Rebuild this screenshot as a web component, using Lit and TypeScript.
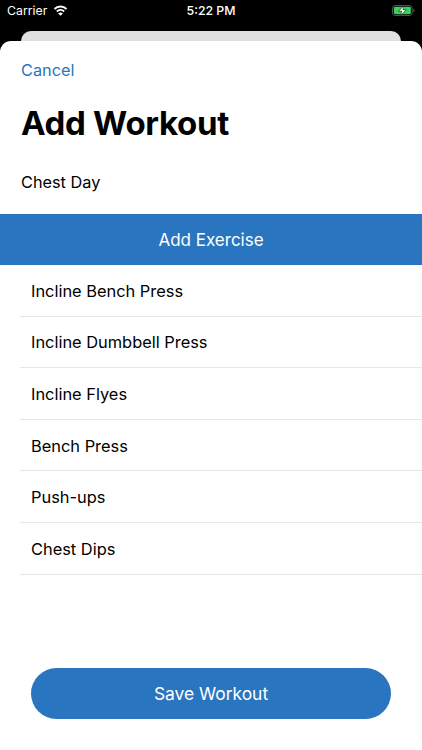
import { LitElement, html, css, svg } from "lit";
import { customElement } from "lit/decorators.js";

const EXERCISES = [
  "Incline Bench Press",
  "Incline Dumbbell Press",
  "Incline Flyes",
  "Bench Press",
  "Push-ups",
  "Chest Dips",
];

const wifi = svg`<svg width="15" height="11" viewBox="0 0 17 13">
  <path d="M1.400 4.700C5.400 .7 11.600 .7 15.600 4.700" fill="none" stroke="#fff" stroke-width="2.300"/>
  <path d="M4.200 7.700C6.600 5.400 10.400 5.400 12.800 7.700" fill="none" stroke="#fff" stroke-width="2.300"/>
  <path d="M8.500 12.800 11.300 10C9.700 8.500 7.300 8.500 5.700 10z" fill="#fff"/>
</svg>`;

const battery = svg`<svg width="23" height="11" viewBox="0 0 25 12">
  <rect x="0.500" y="0.500" width="21.500" height="11" rx="3" fill="none" stroke="#5c5c5c"/>
  <rect x="2" y="2" width="18.500" height="8" rx="1.500" fill="#3bd15c"/>
  <path d="M23.300 4v4c.8-.3 1.300-1.100 1.300-2s-.5-1.700-1.300-2z" fill="#5c5c5c"/>
  <path d="M13 0.500 7 6.800h3.500L9.500 11.500l6-6.300H12z" fill="#fff" stroke="#000" stroke-width="0.600"/>
</svg>`;

@customElement("app-root")
export class AppRoot extends LitElement {
  static styles = css`
    :host {
      display: block;
      width: 422px;
      height: 750px;
      overflow: hidden;
      background: #000;
      font-family: Inter, "Liberation Sans", sans-serif;
      color: #000;
    }
    .screen {
      height: 750px;
      display: flex;
      flex-direction: column;
    }
    .status {
      height: 31px;
      flex: none;
      box-sizing: border-box;
      padding: 0 7px;
      display: grid;
      grid-template-columns: 1fr auto 1fr;
      align-items: start;
      color: #fff;
      font-size: 12.300px;
      line-height: 16px;
    }
    .status-left {
      display: flex;
      align-items: center;
      gap: 6px;
      padding-top: 3px;
    }
    .status-time {
      padding-top: 3px;
      font-weight: 500;
    }
    .status-left svg {
      display: block;
      margin-top: -2px;
    }
    .status-right {
      justify-self: end;
      padding-top: 5px;
      display: flex;
    }
    .peek {
      height: 10px;
      flex: none;
      margin: 0 21px;
      background: #e0e0e0;
      border-radius: 10px 10px 0 0;
    }
    .sheet {
      flex: 1;
      min-height: 0;
      background: #fff;
      border-radius: 11px 11px 0 0;
      display: flex;
      flex-direction: column;
    }
    .cancel {
      margin: 18px 0 0 21px;
      font-size: 16.300px;
      line-height: 22px;
      color: #2a75bf;
    }
    h1 {
      margin: 22px 0 0 21px;
      font-size: 33px;
      line-height: 41px;
      font-weight: 700;
      letter-spacing: -0.300px;
    }
    .name {
      margin: 27px 0 0 21px;
      font-size: 16.300px;
      line-height: 22px;
    }
    .add {
      margin-top: 21px;
      height: 51px;
      flex: none;
      background: #2a75bf;
      color: #fff;
      font-size: 17px;
      display: flex;
      align-items: center;
      justify-content: center;
    }
    .list {
      margin: 0 0 0 20px;
      padding: 0;
      list-style: none;
    }
    .list li {
      height: 51.600px;
      box-sizing: border-box;
      padding: 1px 0 0 11px;
      border-bottom: 1px solid #e6e6e6;
      display: flex;
      align-items: center;
      font-size: 16.400px;
    }
    .save {
      margin: auto 31px 31px;
      height: 51px;
      flex: none;
      border-radius: 25.500px;
      background: #2a75bf;
      color: #fff;
      font-size: 17.400px;
      display: flex;
      align-items: center;
      justify-content: center;
    }
  `;

  render() {
    return html`
      <div class="screen">
        <div class="status">
          <div class="status-left"><span>Carrier</span>${wifi}</div>
          <div class="status-time">5:22 PM</div>
          <div class="status-right">${battery}</div>
        </div>
        <div class="peek"></div>
        <div class="sheet">
          <div class="cancel">Cancel</div>
          <h1>Add Workout</h1>
          <div class="name">Chest Day</div>
          <div class="add">Add Exercise</div>
          <ul class="list">
            ${EXERCISES.map((e) => html`<li>${e}</li>`)}
          </ul>
          <div class="save">Save Workout</div>
        </div>
      </div>
    `;
  }
}
